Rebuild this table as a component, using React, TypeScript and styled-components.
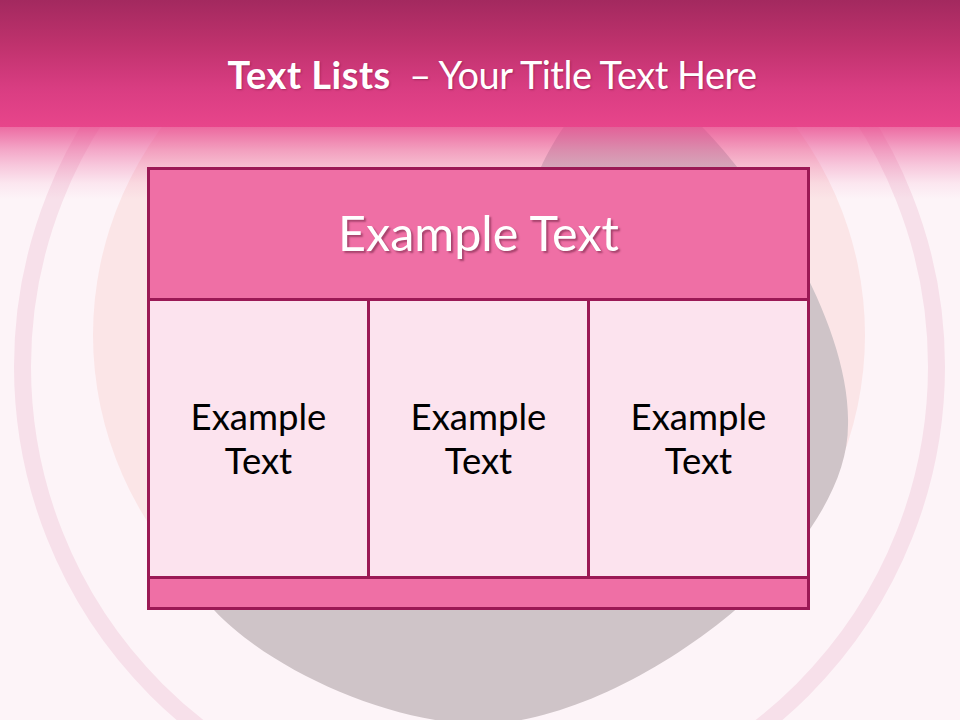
import styled, { createGlobalStyle } from 'styled-components';

const GlobalStyle = createGlobalStyle`
  html,
  body {
    margin: 0;
    padding: 0;
    background: #fdf4f8;
  }

  body {
    font-family: Lato, 'Open Sans', sans-serif;
  }
`;

const Slide = styled.div`
  position: relative;
  width: 960px;
  height: 720px;
  overflow: hidden;
  background: #fdf4f8;
  display: flex;
  flex-direction: column;
`;

const Backdrop = styled.svg`
  position: absolute;
  inset: 0;
  width: 960px;
  height: 720px;
`;

const Header = styled.header`
  position: relative;
  flex: none;
  height: 127px;
  box-sizing: border-box;
  padding: 20px 0 0 24px;
  display: flex;
  align-items: center;
  justify-content: center;
  background: linear-gradient(
    180deg,
    #a3295f 0%,
    #bf326d 35%,
    #d93d82 70%,
    #e8458b 100%
  );
`;

const Title = styled.h1`
  margin: 0;
  font-size: 38px;
  font-weight: 400;
  color: #fff;
  white-space: pre;
  text-shadow: 1px 1px 2px rgba(90, 0, 35, 0.35);
`;

const Strong = styled.span`
  font-weight: 700;
  letter-spacing: 0.5px;
`;

const Rest = styled.span`
  letter-spacing: -0.5px;
`;

const Table = styled.div`
  position: relative;
  width: 663px;
  box-sizing: border-box;
  margin: 40px 0 0 147px;
  padding: 3px;
  display: grid;
  grid-template-columns: repeat(3, 1fr);
  grid-template-rows: 128px 275px 28px;
  gap: 3px;
  background: #9b1955;
`;

const Banner = styled.div`
  grid-column: 1 / -1;
  display: flex;
  align-items: center;
  justify-content: center;
  padding-bottom: 4px;
  background: #ef6fa5;
  color: #fff;
  font-size: 48.5px;
  text-shadow: 2px 2px 2px rgba(60, 0, 25, 0.4);
`;

const Cell = styled.div`
  display: flex;
  align-items: center;
  justify-content: center;
  padding-bottom: 2px;
  text-align: center;
  background: #fce3ee;
  color: #000;
  font-size: 36.5px;
  line-height: 44px;
`;

const Footer = styled.div`
  grid-column: 1 / -1;
  background: #ef6fa5;
`;

const cells = ['Example', 'Example', 'Example'];

export default function App() {
  return (
    <>
      <GlobalStyle />
      <Slide>
        <Backdrop viewBox="0 0 960 720" aria-hidden>
          <defs>
            <linearGradient id="fade" x1="0" y1="0" x2="0" y2="1">
              <stop offset="0" stopColor="#e8468b" stopOpacity="0.78" />
              <stop offset="0.32" stopColor="#e8468b" stopOpacity="0.44" />
              <stop offset="0.53" stopColor="#e8468b" stopOpacity="0.26" />
              <stop offset="0.78" stopColor="#e8468b" stopOpacity="0.08" />
              <stop offset="1" stopColor="#e8468b" stopOpacity="0" />
            </linearGradient>
          </defs>
          <circle cx="479.5" cy="366.5" r="457" fill="none" stroke="#f7e0ea" strokeWidth="17" />
          <ellipse cx="479" cy="335" rx="386" ry="365" fill="#fbe5e7" />
          <path
            d="M630 80 C690 80 852 290 848 425 C848 560 620 724 481 724 C390 724 270 670 214 610 C120 540 510 230 542 165 C553 143 585 80 630 80 Z"
            fill="#cfc4c8"
          />
          <rect x="0" y="127" width="960" height="72" fill="url(#fade)" />
        </Backdrop>

        <Header>
          <Title>
            <Strong>Text Lists</Strong>
            <Rest>{'  – Your Title Text Here'}</Rest>
          </Title>
        </Header>

        <Table>
          <Banner>Example Text</Banner>
          {cells.map((word, idx) => (
            <Cell key={idx}>
              {word}
              <br />
              Text
            </Cell>
          ))}
          <Footer />
        </Table>
      </Slide>
    </>
  );
}
